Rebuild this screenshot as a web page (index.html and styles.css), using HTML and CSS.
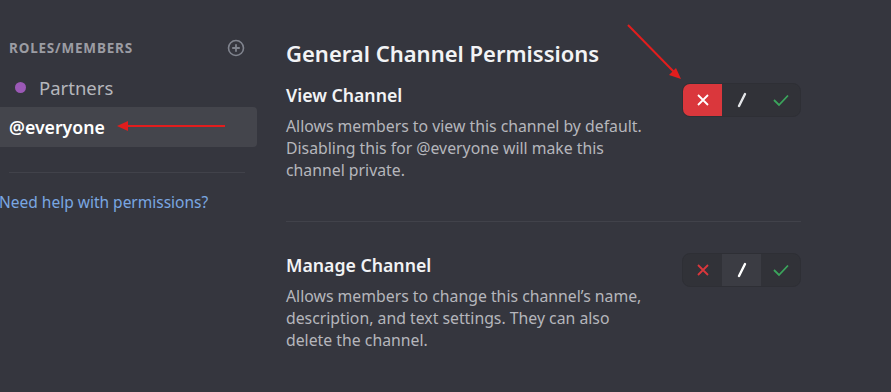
FILE: index.html
```html
<!DOCTYPE html>
<html lang="en">
<head>
    <meta charset="UTF-8">
    <meta name="viewport" content="width=device-width, initial-scale=1.0">
    <title>Channel Permissions</title>
    <link rel="stylesheet" href="styles.css">
</head>
<body>
    <div class="page">
        <aside class="sidebar">
            <div class="side-header">
                <span>ROLES/MEMBERS</span>
                <svg class="add-icon" width="18" height="18" viewBox="0 0 18 18">
                    <circle cx="9" cy="9" r="7.5" fill="none" stroke="#80848e" stroke-width="1.6"/>
                    <path d="M9 5.2v7.6M5.2 9h7.6" stroke="#80848e" stroke-width="1.8"/>
                </svg>
            </div>
            <div class="role-row">
                <span class="role-dot"></span>
                <span>Partners</span>
            </div>
            <div class="role-row selected">
                <span>@everyone</span>
            </div>
            <div class="side-divider"></div>
            <a class="help-link" href="#">Need help with permissions?</a>
        </aside>

        <main class="content">
            <h2>General Channel Permissions</h2>

            <div class="perm">
                <div class="perm-text">
                    <div class="perm-title">View Channel</div>
                    <div class="perm-desc">Allows members to view this channel by default. Disabling this for @everyone will make this channel private.</div>
                </div>
                <div class="toggle">
                    <div class="seg deny active">
                        <svg width="14" height="14" viewBox="0 0 14 14"><path d="M2 2l10 10M12 2L2 12" stroke="#fff" stroke-width="1.8"/></svg>
                    </div>
                    <div class="seg">
                        <svg width="14" height="16" viewBox="0 0 14 16"><path d="M10 2L4 14" stroke="#e3e5e8" stroke-width="2.4" stroke-linecap="round"/></svg>
                    </div>
                    <div class="seg">
                        <svg width="18" height="14" viewBox="0 0 18 14"><path d="M2 7l5 5L16 2.5" fill="none" stroke="#3ba55c" stroke-width="1.8"/></svg>
                    </div>
                </div>
            </div>

            <div class="perm-divider"></div>

            <div class="perm">
                <div class="perm-text">
                    <div class="perm-title">Manage Channel</div>
                    <div class="perm-desc">Allows members to change this channel’s name, description, and text settings. They can also delete the channel.</div>
                </div>
                <div class="toggle">
                    <div class="seg">
                        <svg width="14" height="14" viewBox="0 0 14 14"><path d="M2 2l10 10M12 2L2 12" stroke="#da373c" stroke-width="1.8"/></svg>
                    </div>
                    <div class="seg neutral">
                        <svg width="14" height="16" viewBox="0 0 14 16"><path d="M10 2L4 14" stroke="#fff" stroke-width="2.4" stroke-linecap="round"/></svg>
                    </div>
                    <div class="seg">
                        <svg width="18" height="14" viewBox="0 0 18 14"><path d="M2 7l5 5L16 2.5" fill="none" stroke="#3ba55c" stroke-width="1.8"/></svg>
                    </div>
                </div>
            </div>
        </main>
    </div>

    <!-- annotation arrows -->
    <svg class="arrows" width="891" height="392" viewBox="0 0 891 392">
        <path d="M628 25L676 74" stroke="#e21d1d" stroke-width="2"/>
        <path d="M681 79l-12-4 7-7z" fill="#e21d1d"/>
        <path d="M225 126H124" stroke="#e21d1d" stroke-width="2"/>
        <path d="M117 126l11-5v10z" fill="#e21d1d"/>
    </svg>
</body>
</html>
```

FILE: styles.css
```css
* { margin: 0; padding: 0; box-sizing: border-box; }
body {
    background: #35363e;
    font-family: 'Noto Sans', 'Open Sans', sans-serif;
    color: #f2f3f5;
    overflow: hidden;
}
.page { display: flex; align-items: flex-start; }

.sidebar {
    width: 267px;
    margin-left: -10px;
    padding-top: 38px;
    flex-shrink: 0;
}
.side-header {
    display: flex;
    justify-content: space-between;
    align-items: center;
    height: 20px;
    padding-left: 19px;
    padding-right: 12px;
    margin-bottom: 9px;
    font-size: 13.5px;
    font-weight: 700;
    color: #9b9ca3;
    letter-spacing: 0.8px;
}
.role-row {
    display: flex;
    align-items: center;
    height: 40px;
    padding-left: 25px;
    font-size: 18.5px;
    color: #b5b6bc;
    border-radius: 4px;
}
.role-dot {
    width: 11px;
    height: 11px;
    border-radius: 50%;
    background: #9b59b6;
    margin-right: 13px;
}
.role-row.selected {
    padding-left: 19px;
    background: #44454c;
    color: #ffffff;
    font-size: 17.7px;
    font-weight: 600;
}
.side-divider {
    height: 1px;
    background: #41424a;
    margin: 25px 12px 0 19px;
}
.help-link {
    display: block;
    margin-top: 19px;
    padding-left: 9px;
    line-height: 20px;
    font-size: 15.5px;
    color: #7aa7e2;
    text-decoration: none;
}

.content {
    margin-left: 29px;
    width: 515px;
    padding-top: 40px;
}
h2 {
    font-size: 22px;
    font-weight: 600;
    line-height: 26px;
    margin-bottom: 19px;
}
.perm { display: flex; justify-content: space-between; align-items: flex-start; }
.perm-text { width: 365px; }
.perm-title {
    font-size: 17.7px;
    font-weight: 600;
    line-height: 20px;
    margin-bottom: 10px;
}
.perm-desc {
    font-size: 15.8px;
    line-height: 22px;
    color: #b5b6bc;
}
.perm-divider {
    height: 1px;
    background: #41424a;
    margin: 40px 0 33px;
}

.toggle {
    display: flex;
    margin-top: -2px;
    height: 34px;
    border: 1px solid #2e2f35;
    border-radius: 8px;
    background: #313238;
    overflow: hidden;
}
.seg {
    width: 39px;
    display: flex;
    align-items: center;
    justify-content: center;
}
.seg.deny.active { background: #da373c; }
.seg.neutral { background: #3b3c43; }

.arrows {
    position: absolute;
    top: 0;
    left: 0;
    pointer-events: none;
}
```
